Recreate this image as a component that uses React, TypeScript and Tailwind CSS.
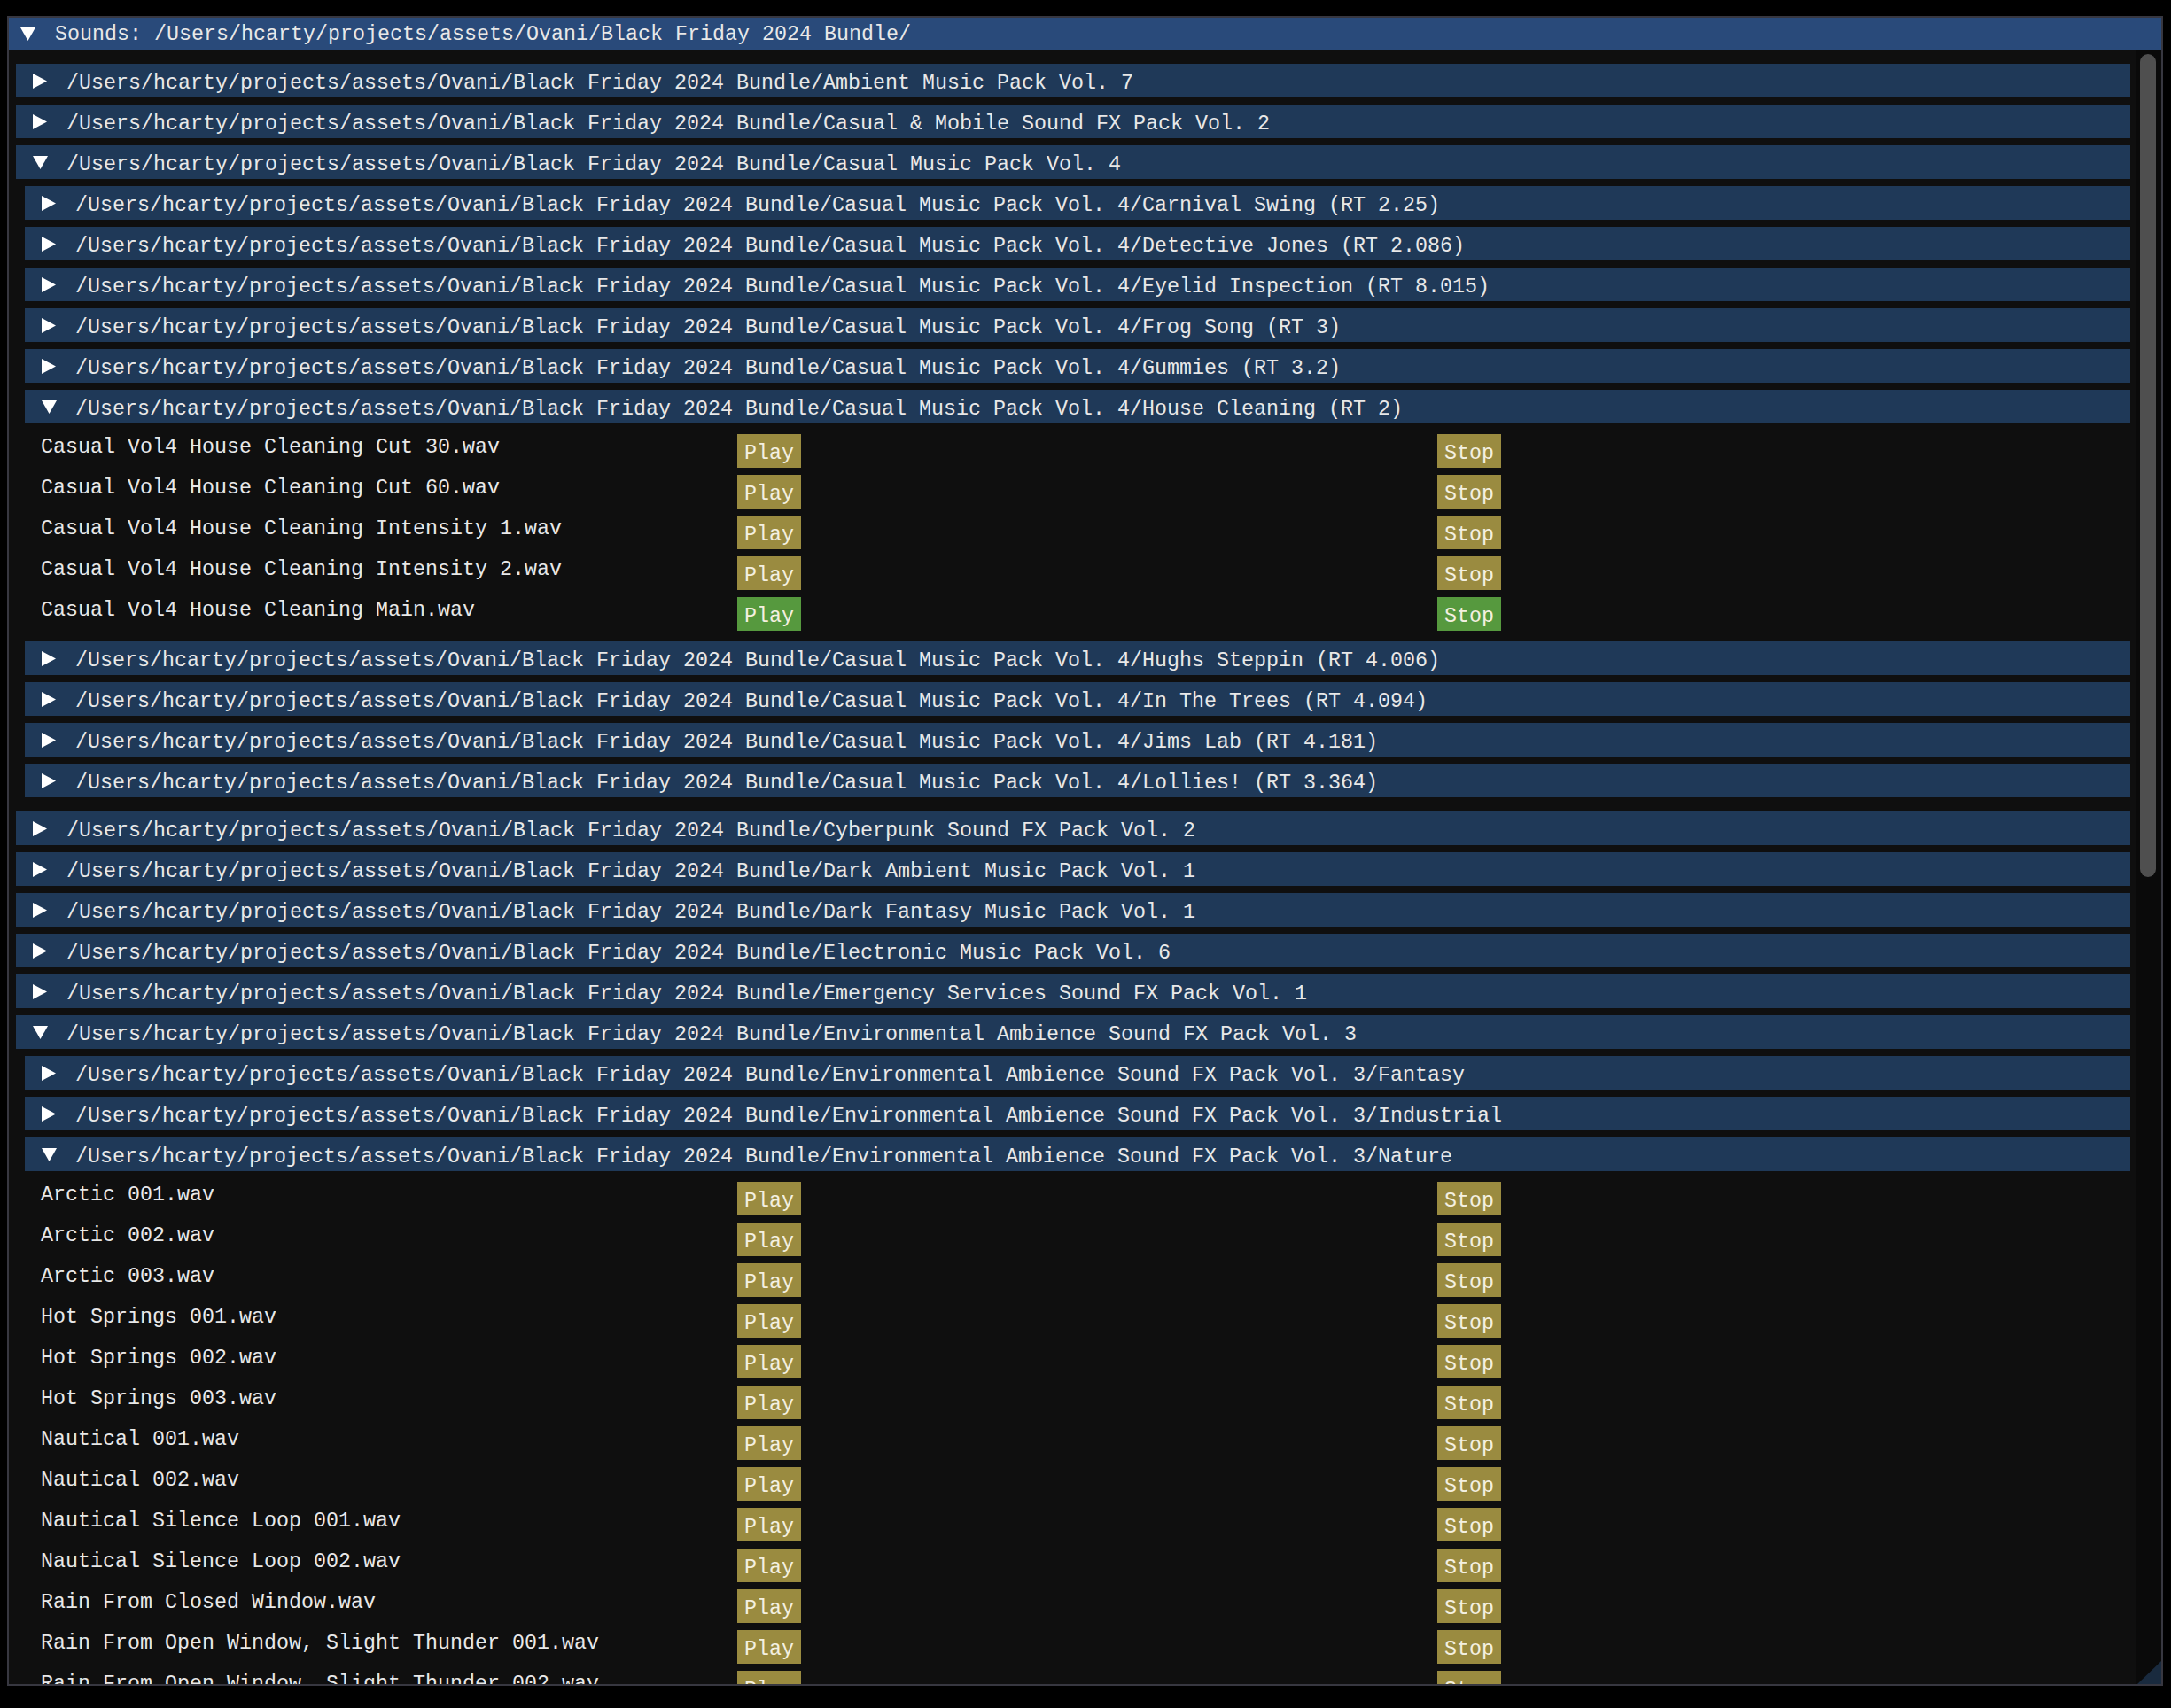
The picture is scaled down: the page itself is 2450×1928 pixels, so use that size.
import { useState } from "react";

const BASE = "/Users/hcarty/projects/assets/Ovani/Black Friday 2024 Bundle";
const PLAYING = "Casual Vol4 House Cleaning Main.wav";

type Song = { name: string; files?: string[] };
type Pack = { name: string; songs?: Song[] };

const houseCleaning = ["Cut 30", "Cut 60", "Intensity 1", "Intensity 2", "Main"].map(
  (s) => `Casual Vol4 House Cleaning ${s}.wav`
);

const nature = [
  "Arctic 001.wav",
  "Arctic 002.wav",
  "Arctic 003.wav",
  "Hot Springs 001.wav",
  "Hot Springs 002.wav",
  "Hot Springs 003.wav",
  "Nautical 001.wav",
  "Nautical 002.wav",
  "Nautical Silence Loop 001.wav",
  "Nautical Silence Loop 002.wav",
  "Rain From Closed Window.wav",
  "Rain From Open Window, Slight Thunder 001.wav",
  "Rain From Open Window, Slight Thunder 002.wav",
  "Rain From Open Window, Slight Thunder 003.wav",
];

const packs: Pack[] = [
  { name: "Ambient Music Pack Vol. 7" },
  { name: "Casual & Mobile Sound FX Pack Vol. 2" },
  {
    name: "Casual Music Pack Vol. 4",
    songs: [
      { name: "Carnival Swing (RT 2.25)" },
      { name: "Detective Jones (RT 2.086)" },
      { name: "Eyelid Inspection (RT 8.015)" },
      { name: "Frog Song (RT 3)" },
      { name: "Gummies (RT 3.2)" },
      { name: "House Cleaning (RT 2)", files: houseCleaning },
      { name: "Hughs Steppin (RT 4.006)" },
      { name: "In The Trees (RT 4.094)" },
      { name: "Jims Lab (RT 4.181)" },
      { name: "Lollies! (RT 3.364)" },
    ],
  },
  { name: "Cyberpunk Sound FX Pack Vol. 2" },
  { name: "Dark Ambient Music Pack Vol. 1" },
  { name: "Dark Fantasy Music Pack Vol. 1" },
  { name: "Electronic Music Pack Vol. 6" },
  { name: "Emergency Services Sound FX Pack Vol. 1" },
  {
    name: "Environmental Ambience Sound FX Pack Vol. 3",
    songs: [{ name: "Fantasy" }, { name: "Industrial" }, { name: "Nature", files: nature }],
  },
];

const Arrow = ({ open }: { open: boolean }) => (
  <span className="flex h-[18px] w-[18px] shrink-0 items-center justify-center self-center">
    {open ? (
      <svg width="17" height="15" viewBox="0 0 17 15">
        <polygon points="0,0 17,0 8.5,15" fill="#ffffff" />
      </svg>
    ) : (
      <svg width="16" height="17" viewBox="0 0 16 17">
        <polygon points="0,0 16,8.5 0,17" fill="#ffffff" />
      </svg>
    )}
  </span>
);

const Header = ({ label, open, onClick }: { label: string; open: boolean; onClick: () => void }) => (
  <div onClick={onClick} className="flex h-[38px] cursor-pointer items-start bg-[#1f3958] pl-[18px]">
    <Arrow open={open} />
    <span className="ml-[21px] whitespace-pre pt-[9px]">{label}</span>
  </div>
);

const FileRow = ({ file }: { file: string }) => {
  const active = file === PLAYING;
  const btn = `flex h-[38px] w-[72px] justify-center pt-[9px] text-[#f4f0e0] ${
    active ? "bg-[#56993e]" : "bg-[#9a8b40]"
  }`;
  return (
    <div className="grid h-[38px] grid-cols-[786px_790px_auto]">
      <span className="whitespace-pre pt-[2px]">{file}</span>
      <button className={btn}>Play</button>
      <button className={btn}>Stop</button>
    </div>
  );
};

export default function App() {
  const [open, setOpen] = useState<Record<string, boolean>>({
    "Casual Music Pack Vol. 4": true,
    "Casual Music Pack Vol. 4/House Cleaning (RT 2)": true,
    "Environmental Ambience Sound FX Pack Vol. 3": true,
    "Environmental Ambience Sound FX Pack Vol. 3/Nature": true,
  });
  const [rootOpen, setRootOpen] = useState(true);

  const toggle = (key: string) => setOpen({ ...open, [key]: !open[key] });

  return (
    <div className="h-[1928px] w-[2450px] overflow-hidden bg-black pl-[8px] pt-[18px] font-['Liberation_Mono',monospace] text-[23.33px] leading-[26px] text-[#e8e8e8]">
      <div className="relative flex h-[1885px] w-[2433px] flex-col border-2 border-[#6e6e8080]">
        <div
          onClick={() => setRootOpen(!rootOpen)}
          className="flex h-[36px] shrink-0 cursor-pointer items-start bg-[#294a7a] pl-[12px]"
        >
          <Arrow open={rootOpen} />
          <span className="ml-[22px] whitespace-pre pt-[6px]">Sounds: {BASE}/</span>
        </div>

        <div className="flex min-h-0 flex-1 bg-[#0f0f0f]">
          <div className="min-w-0 flex-1 overflow-hidden pl-[8px] pr-[6px] pt-[16px]">
            {rootOpen && (
              <div className="flex flex-col gap-2">
                {packs.map((pack) => {
                  const packOpen = !!open[pack.name] && !!pack.songs;
                  return (
                    <div key={pack.name} className="flex flex-col gap-2">
                      <Header label={`${BASE}/${pack.name}`} open={packOpen} onClick={() => toggle(pack.name)} />
                      {packOpen && (
                        <div className="mb-[8px] flex flex-col gap-2 pl-[10px]">
                          {pack.songs!.map((song) => {
                            const key = `${pack.name}/${song.name}`;
                            const songOpen = !!open[key] && !!song.files;
                            return (
                              <div key={key} className="flex flex-col gap-2">
                                <Header
                                  label={`${BASE}/${key}`}
                                  open={songOpen}
                                  onClick={() => toggle(key)}
                                />
                                {songOpen && (
                                  <div className="my-[4px] flex flex-col gap-2 pl-[18px]">
                                    {song.files!.map((f) => (
                                      <FileRow key={f} file={f} />
                                    ))}
                                  </div>
                                )}
                              </div>
                            );
                          })}
                        </div>
                      )}
                    </div>
                  );
                })}
              </div>
            )}
          </div>

          <div className="w-[29px] shrink-0 bg-[#0a0a0a] pl-[5px] pt-[5px]">
            <div className="h-[929px] w-[18px] rounded-full bg-[#4f4f4f]" />
          </div>
        </div>

        <svg className="absolute bottom-0 right-0" width="27" height="26" viewBox="0 0 27 26">
          <polygon points="27,0 27,26 0,26" fill="#192a3e" />
        </svg>
      </div>
    </div>
  );
}
